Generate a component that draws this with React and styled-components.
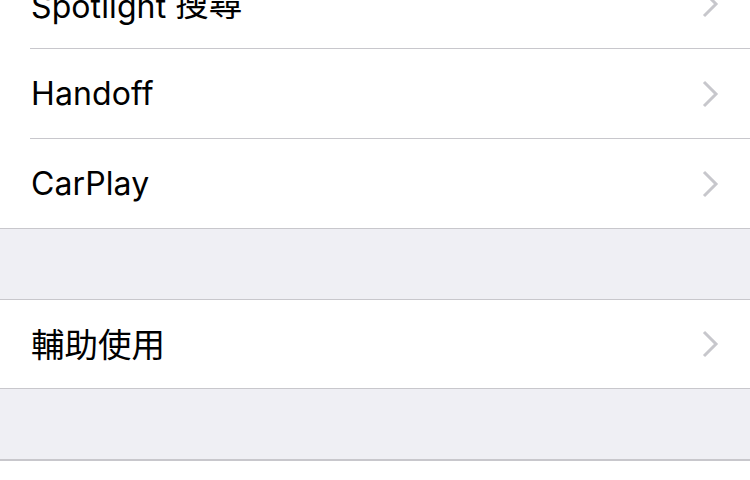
import React from "react";
import styled, { createGlobalStyle } from "styled-components";

const Global = createGlobalStyle`
  html, body {
    margin: 0;
    padding: 0;
    background: #ffffff;
    overflow: hidden;
  }
  body {
    font-family: Inter, "Noto Sans CJK TC", sans-serif;
    -webkit-font-smoothing: antialiased;
  }
`;

const Page = styled.div`
  width: 750px;
  height: 480px;
  overflow: hidden;
  background: #ffffff;
`;

const Scroller = styled.div`
  margin-top: -41px;
`;

const Group = styled.div`
  background: #ffffff;
  border-top: ${(p) => (p.$top ? "1px solid #c8c7cc" : "none")};
  border-bottom: 1px solid #c8c7cc;
`;

const Spacer = styled.div`
  height: 70px;
  background: #efeff4;
`;

const Row = styled.div`
  display: flex;
  align-items: center;
  height: ${(p) => p.$h || 89}px;
  padding-left: 31px;
  padding-right: 30px;
  position: relative;
  &:not(:last-child)::after {
    content: "";
    position: absolute;
    left: 30px;
    right: 0;
    bottom: -1px;
    height: 1px;
    background: #c8c7cc;
  }
  & + & {
    margin-top: 1px;
  }
`;

const Label = styled.span`
  flex: 1;
  font-size: 32px;
  color: #000000;
  letter-spacing: 0.1px;
  white-space: nowrap;
`;

// CJK glyphs sit a little low in Noto, nudge them up
const Cjk = styled.span`
  font-family: "Noto Sans CJK TC", sans-serif;
  font-size: 33.5px;
  letter-spacing: 0;
  position: relative;
  top: -2px;
`;

const Chevron = () => (
  <svg width="20" height="28" viewBox="0 0 20 28">
    <path
      d="M4 2 L16 14 L4 26"
      fill="none"
      stroke="#c7c7cc"
      strokeWidth="3"
      strokeLinecap="butt"
      strokeLinejoin="miter"
    />
  </svg>
);

const Item = ({ children, h }) => (
  <Row $h={h}>
    <Label>{children}</Label>
    <Chevron />
  </Row>
);

export default function App() {
  return (
    <Page>
      <Global />
      <Scroller>
        <Group>
          <Item>
            Spotlight <Cjk>搜尋</Cjk>
          </Item>
          <Item>Handoff</Item>
          <Item>CarPlay</Item>
        </Group>
        <Spacer />
        <Group $top>
          <Item h={88}>
            <Cjk>輔助使用</Cjk>
          </Item>
        </Group>
        <Spacer />
        <Group $top />
      </Scroller>
    </Page>
  );
}
